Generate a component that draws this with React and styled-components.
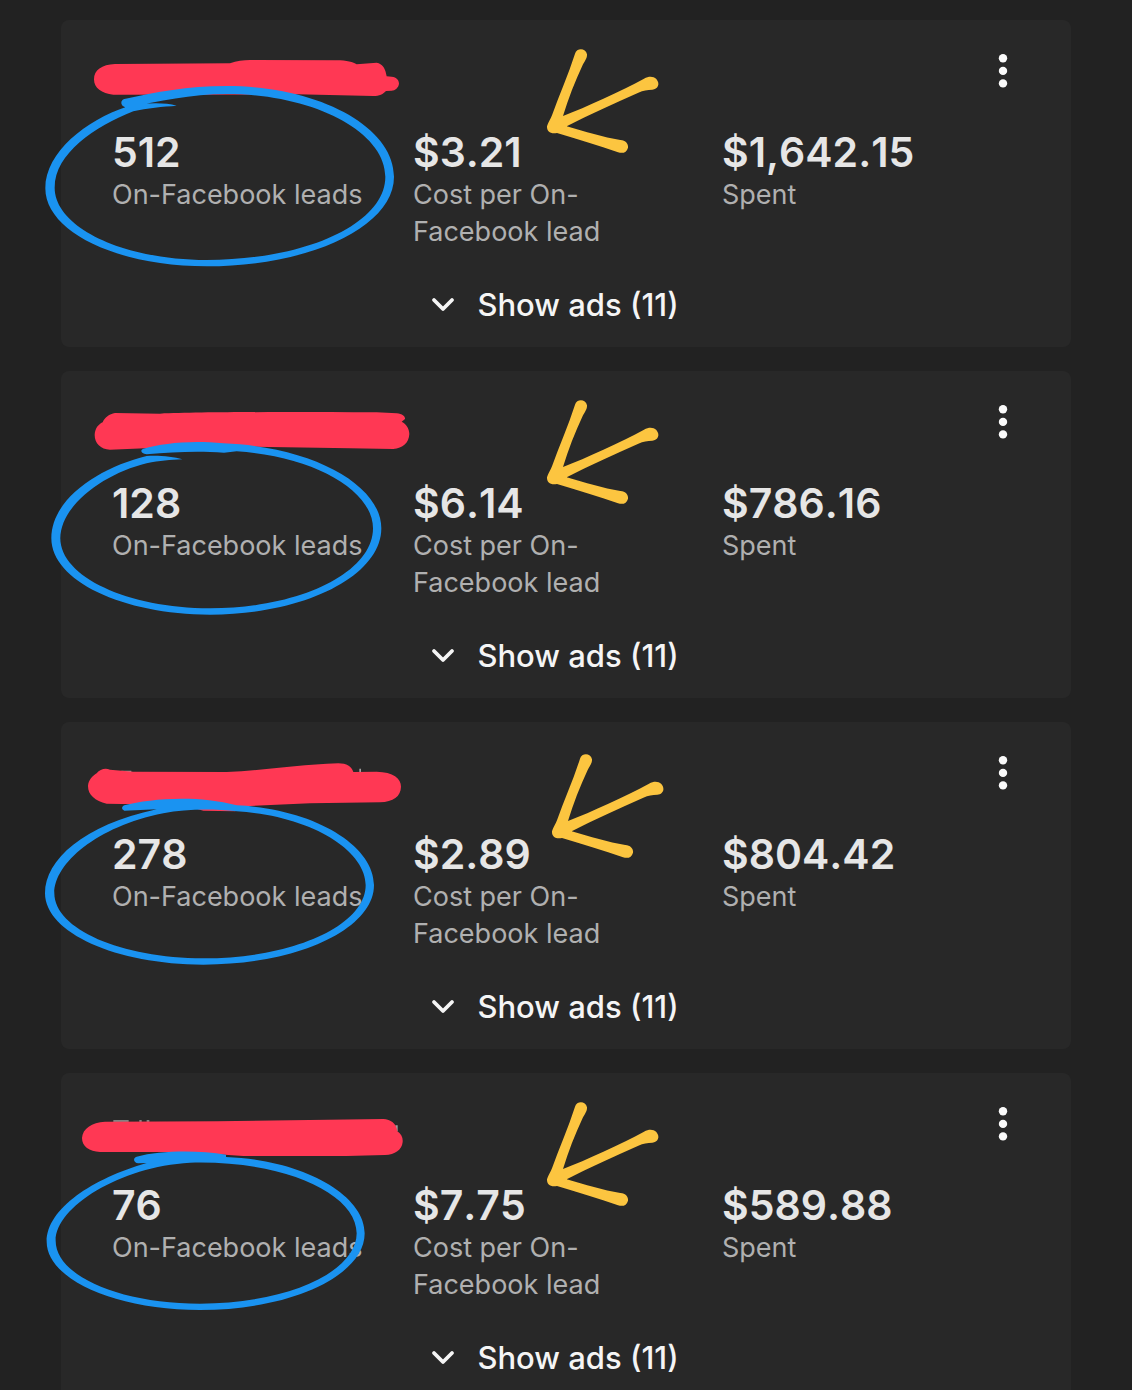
import React from 'react';
import styled, { createGlobalStyle } from 'styled-components';

const GlobalStyle = createGlobalStyle`
	* {
		box-sizing: border-box;
	}

	body {
		margin: 0;
		background: #222222;
		font-family: Inter, 'Liberation Sans', sans-serif;
		overflow-x: hidden;
	}
`;

const CardList = styled.main`
	display: flex;
	flex-direction: column;
	gap: 24px;
	padding: 20px 61px 0;
`;

const Card = styled.article`
	position: relative;
	padding: 34px 51px 19px;
	border-radius: 8px;
	background: #282828;
`;

const CardHeader = styled.header`
	display: flex;
	justify-content: flex-end;
`;

const MenuButton = styled.button`
	display: flex;
	justify-content: center;
	width: 34px;
	height: 34px;
	padding: 0;
	border: none;
	background: none;
	color: #fafafa;
	cursor: pointer;
`;

const Metrics = styled.div`
	display: grid;
	grid-template-columns: 301fr 309fr 298fr;
	margin-top: 40px;
`;

const Metric = styled.div`
	position: relative;
`;

const Value = styled.div`
	font-size: 41px;
	font-weight: 600;
	font-kerning: none;
	line-height: 48px;
	color: #e6e6e6;
`;

const Label = styled.div`
	max-width: ${({ $narrow }) => ($narrow ? '200px' : 'none')};
	font-size: 27px;
	line-height: 37px;
	white-space: ${({ $narrow }) => ($narrow ? 'normal' : 'nowrap')};
	color: #b0b0b0;
`;

const ShowAds = styled.button`
	display: flex;
	align-items: center;
	gap: 22px;
	height: 48px;
	margin: 30px auto 0;
	padding: 0 22px 0 0;
	border: none;
	background: none;
	color: #f5f5f5;
	font-family: inherit;
	font-size: 31px;
	font-weight: 500;
	white-space: nowrap;
	cursor: pointer;
`;

const Scribble = styled.svg`
	position: absolute;
	z-index: 1;
	top: 20px;
	left: -31px;
	width: 400px;
	height: 240px;
	overflow: visible;
	pointer-events: none;
`;

const ArrowMark = styled.svg`
	position: absolute;
	top: ${({ $low }) => ($low ? '-85px' : '-88px')};
	left: ${({ $low }) => ($low ? '112px' : '107px')};
	width: 160px;
	height: 130px;
	pointer-events: none;
`;

/* Rings are closed ribbons: outer edge first, then back along the inner edge. */
const campaigns = [
	{
		id: 1,
		leads: '512',
		cost: '$3.21',
		spent: '$1,642.15',
		ads: 11,
		originY: 0,
		marker:
			'M192 118 C192 90 215 74 255 72 L600 70 C620 62 640 60 660 60 L920 61 C950 61 970 66 980 73 L1040 68 C1058 72 1064 84 1067 96 L1070 109 L1085 110 C1100 112 1107 120 1107 131 C1106 142 1095 152 1085 152 L1068 153 C1060 162 1048 168 1030 168 L800 163 L250 164 C215 160 192 145 192 118 Z',
		ring: 'M283 177 C380 156 470 138 590 138 C866 138 1092 260 1092 410 C1092 560 840 679 530 679 C260 679 46 575 46 445 C46 335 170 240 290 200 C340 188 400 186 440 197 C400 200 350 204 310 214 C195 260 74 340 74 443 C74 562 280 660 530 660 C825 660 1066 552 1066 410 C1066 275 850 162 590 162 C480 162 390 184 290 202 C270 200 270 180 283 177 Z',
	},
	{
		id: 2,
		leads: '128',
		cost: '$6.14',
		spent: '$786.16',
		ads: 11,
		originY: 3,
		marker:
			'M194 135 C195 115 205 103 218 97 C224 82 238 72 255 69 L390 71 C520 65 800 66 1040 67 L1100 70 C1118 72 1126 80 1125 87 L1115 95 C1130 103 1138 117 1138 132 C1137 158 1118 175 1090 177 L960 175 L660 170 L380 173 L240 179 C212 178 194 160 194 135 Z',
		ring: 'M340 176 C400 160 480 150 580 160 C850 170 1054 285 1054 415 C1054 558 824 674 540 674 C277 674 64 572 64 445 C64 325 210 232 350 198 C390 196 430 200 457 208 C420 210 390 212 350 220 C225 250 91 345 91 445 C91 560 292 655 540 655 C810 655 1029 548 1029 415 C1029 300 850 198 620 184 L582 188 C500 182 430 186 350 193 C332 190 330 180 340 176 Z',
	},
	{
		id: 3,
		leads: '278',
		cost: '$2.89',
		spent: '$804.42',
		ads: 11,
		originY: -24,
		leftover: 'M988 56 h5 v10 h-5 Z M274 62 h30 v4 h-30 Z',
		marker:
			'M174 108 C175 90 188 78 200 70 C210 58 225 53 240 59 L310 65 L590 66 C700 62 800 44 925 40 C950 40 965 50 970 66 L1040 65 C1090 66 1113 85 1113 110 C1112 140 1090 155 1050 157 L840 160 L660 168 L615 184 L520 182 L460 165 L230 161 C195 152 174 135 174 108 Z',
		ring: 'M283 166 C360 146 500 134 620 166 C850 176 1032 285 1032 405 C1032 537 803 644 520 644 C258 644 45 548 45 430 C45 330 160 225 380 178 L283 182 C274 178 274 170 283 166 Z M620 184 C550 176 470 176 400 190 C200 230 73 340 73 430 C73 537 273 625 520 625 C789 625 1007 527 1007 405 C1007 300 840 196 620 184 Z',
	},
	{
		id: 4,
		leads: '76',
		cost: '$7.75',
		spent: '$589.88',
		ads: 11,
		originY: -21,
		leftover: 'M250 61 h46 v4 h-46 Z M328 61 h7 v4 h-7 Z M350 61 h8 v4 h-8 Z M1096 76 h7 v18 h-7 Z',
		marker:
			'M156 114 C158 85 185 68 225 65 L560 64 L1060 57 C1082 58 1099 70 1102 94 C1114 102 1119 112 1118 126 C1116 150 1095 164 1065 165 L950 168 L640 168 L460 156 L210 156 C178 154 156 140 156 114 Z',
		ring: 'M320 170 C390 152 500 150 588 164 L588 171 C820 180 1004 285 1004 400 C1004 527 783 630 510 630 C256 630 50 538 50 425 C50 325 190 235 350 189 L325 190 C310 188 308 174 320 170 Z M480 188 C270 200 77 320 77 422 C77 528 270 611 510 611 C770 611 980 516 980 400 C980 280 760 180 480 188 Z',
	},
];

const Arrow = ({ low }) => (
	<ArrowMark $low={low} viewBox="0 0 480 390" fill="#fcc540" aria-hidden="true">
		<path d="M165 41 C170 23 197 23 201 43 C202 55 193 65 188 75 C165 125 145 175 129 228 C200 200 300 155 372 116 C388 107 400 109 409 117 C422 132 413 148 397 149 C382 149 370 151 355 158 C280 192 210 222 140 259 C195 275 250 292 301 300 C317 301 326 312 324 323 C320 338 309 341 294 337 C235 316 175 299 111 279 C93 283 80 275 81 259 C84 247 92 238 96 226 C117 165 145 105 165 41 Z" />
	</ArrowMark>
);

const MoreIcon = () => (
	<svg width="10" height="34" viewBox="0 0 10 34" fill="currentColor">
		<circle cx="5" cy="4.3" r="4.2" />
		<circle cx="5" cy="16.9" r="4.2" />
		<circle cx="5" cy="29.4" r="4.2" />
	</svg>
);

const ChevronIcon = () => (
	<svg
		width="24"
		height="24"
		viewBox="0 0 24 24"
		fill="none"
		stroke="currentColor"
		strokeWidth="3.8"
		strokeLinecap="round"
		strokeLinejoin="round"
	>
		<path d="M3 8 L12 17 L21 8" />
	</svg>
);

const CampaignCard = ({ campaign }) => (
	<Card>
		<CardHeader>
			<MenuButton type="button" aria-label="More options">
				<MoreIcon />
			</MenuButton>
		</CardHeader>
		<Metrics>
			<Metric>
				<Value>{campaign.leads}</Value>
				<Label>On-Facebook leads</Label>
			</Metric>
			<Metric>
				<Value>{campaign.cost}</Value>
				<Label $narrow>Cost per On-Facebook lead</Label>
				<Arrow low={campaign.id === 3} />
			</Metric>
			<Metric>
				<Value>{campaign.spent}</Value>
				<Label>Spent</Label>
			</Metric>
		</Metrics>
		<ShowAds type="button">
			<ChevronIcon />
			Show ads ({campaign.ads})
		</ShowAds>
		<Scribble viewBox={`0 ${campaign.originY} 1200 720`} aria-hidden="true">
			{campaign.leftover && <path d={campaign.leftover} fill="#a0a0a0" />}
			<path d={campaign.marker} fill="#ff3854" />
			<path d={campaign.ring} fill="#1a93f1" />
		</Scribble>
	</Card>
);

const App = () => (
	<>
		<GlobalStyle />
		<CardList>
			{campaigns.map((campaign) => (
				<CampaignCard key={campaign.id} campaign={campaign} />
			))}
		</CardList>
	</>
);

export default App;
